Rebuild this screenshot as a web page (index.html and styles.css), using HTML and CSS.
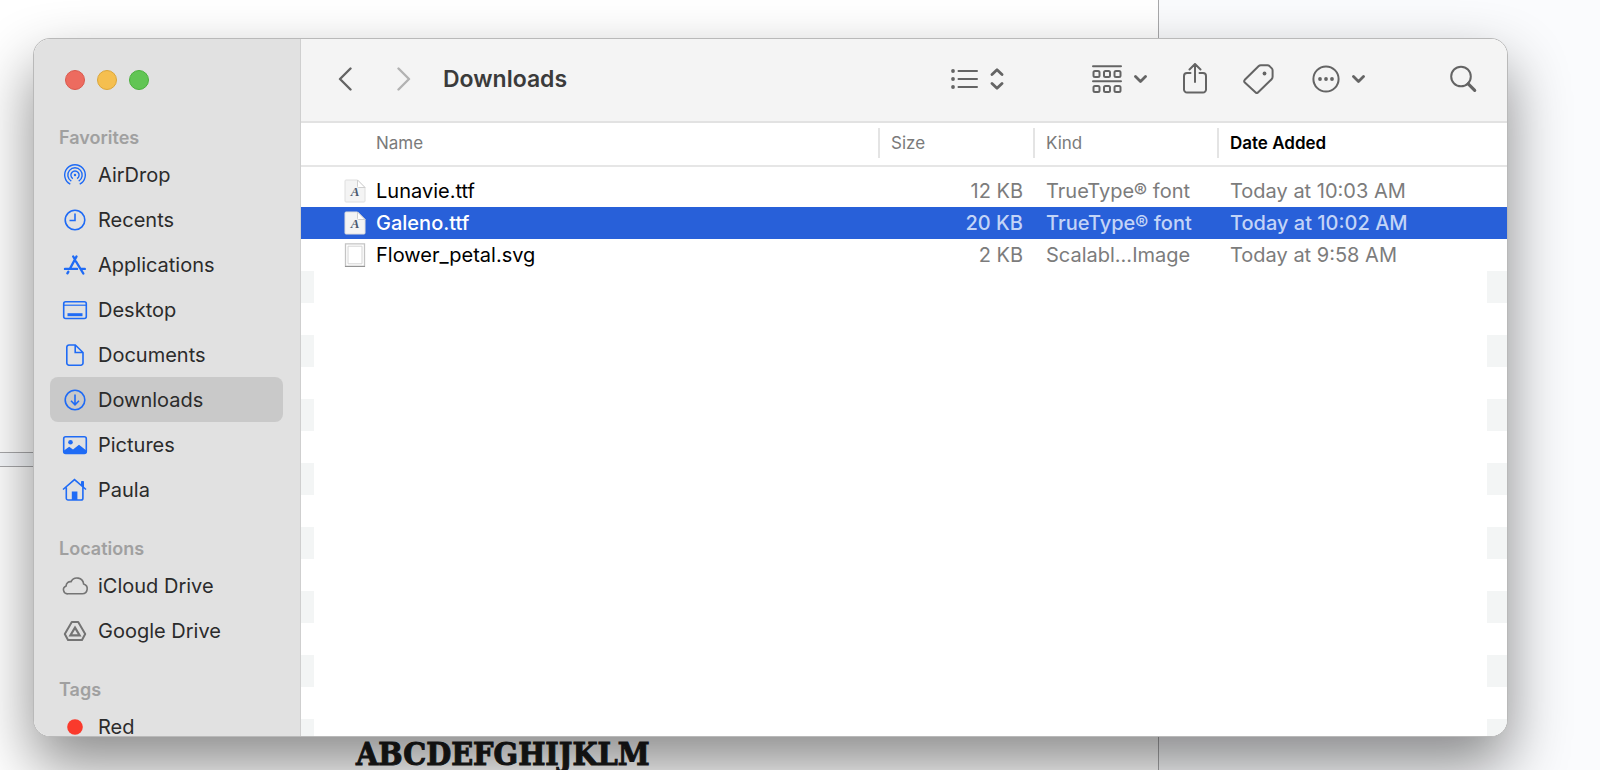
FILE: index.html
```
<!DOCTYPE html>
<html lang="en">
<head>
<meta charset="utf-8">
<title>Downloads</title>
<link rel="stylesheet" href="styles.css">
</head>
<body>
<div class="desktop">
  <div class="page">
    <div class="page-divider"></div>
    <p class="specimen">ABCDEFGHIJKLM</p>
  </div>
  <div class="page-side"></div>

  <main class="window">
    <aside class="sidebar">
      <div class="lights">
        <button class="light light-close" aria-label="Close"></button>
        <button class="light light-min" aria-label="Minimize"></button>
        <button class="light light-zoom" aria-label="Zoom"></button>
      </div>
      <nav class="nav">
        <h2 class="section">Favorites</h2>
        <a class="item" href="#"><svg class="icon" viewBox="0 0 28 28"><circle cx="14" cy="14" r="1.2" fill="currentColor" stroke="none"/><g stroke-width="1.400"><path d="M11.900 17.600a4.100 4.100 0 1 1 4.200 0M10.300 20.200a7.200 7.200 0 1 1 7.400 0M9.300 23.200a10.300 10.300 0 1 1 9.400 0"/></g></svg>AirDrop</a>
        <a class="item" href="#"><svg class="icon" viewBox="0 0 28 28"><circle cx="14" cy="14" r="9.8"/><path d="M14 7.500V14.500H8.500"/></svg>Recents</a>
        <a class="item" href="#"><svg class="icon" viewBox="0 0 28 28"><g stroke-width="2.400" stroke-linecap="round"><path d="M15.500 5.500 9.300 17M12.200 5.500l1.500 2.500M15 10.500l7.300 12M4 17.900h12M19.800 17.900h4M7.300 20.800l-.9 1.500"/></g></svg>Applications</a>
        <a class="item" href="#"><svg class="icon" viewBox="0 0 28 28"><rect x="2.700" y="5.700" width="22.600" height="16.800" rx="2"/><path d="M2.700 9.200h22.600" stroke-width="1.200"/><path d="M6.500 18.700h15" stroke-width="3"/></svg>Desktop</a>
        <a class="item" href="#"><svg class="icon" viewBox="0 0 28 28"><path d="M8 4h6.300L22 11.500V22a2.200 2.200 0 0 1-2.200 2.200H8A2.200 2.200 0 0 1 5.800 22V6.200A2.200 2.200 0 0 1 8 4zM14.200 4v7.500H22"/></svg>Documents</a>
        <a class="item item-active" href="#" aria-current="page"><svg class="icon" viewBox="0 0 28 28"><circle cx="14" cy="14" r="9.800"/><path d="M14 8.500v10M10 14.800l4 4 4-4"/></svg>Downloads</a>
        <a class="item" href="#"><svg class="icon" viewBox="0 0 28 28"><rect x="2.700" y="5.700" width="22.600" height="16.800" rx="2"/><circle cx="9.500" cy="11.300" r="2.300" fill="currentColor" stroke="none"/><path d="M3 19.500 8.200 15.800l3.800 2.700 6-4.800 7 5.500V22H3z" fill="currentColor" stroke="none"/></svg>Pictures</a>
        <a class="item" href="#"><svg class="icon" viewBox="0 0 28 28"><path d="M2 13.500 13.500 3.600 25 13.500M5.300 11.500v10.700a1.800 1.800 0 0 0 1.800 1.800h13a1.800 1.800 0 0 0 1.800-1.800V11"/><path d="M20.500 5.500h2v5.500l-2-1.800z" fill="currentColor" stroke-width="1"/><path d="M10.800 15.500h5.600V24h-5.600z" fill="currentColor" stroke="none"/></svg>Paula</a>
        <h2 class="section section-next">Locations</h2>
        <a class="item item-gray" href="#"><svg class="icon" viewBox="0 0 28 28"><path d="M7 21.800h14.300a5 5 0 0 0 1.300-9.800 6.600 6.600 0 0 0-12.500-2.300 4.300 4.300 0 0 0-5 4.200A4.100 4.100 0 0 0 7 21.800z"/></svg>iCloud Drive</a>
        <a class="item item-gray" href="#"><svg class="icon" viewBox="0 0 28 28"><path stroke-width="2" stroke-linejoin="round" d="M10.800 5h6.400l7 12-3.200 6H7l-3.200-6z"/><path stroke-width="2.200" d="M14 10.600 18.600 18.300H9.400z"/></svg>Google Drive</a>
        <h2 class="section section-next">Tags</h2>
        <a class="item item-red" href="#"><svg class="icon" viewBox="0 0 28 28"><circle cx="14" cy="14" r="7.800" fill="currentColor" stroke="none"/></svg>Red</a>
      </nav>
    </aside>

    <section class="content">
      <header class="toolbar">
        <button class="tool" aria-label="Back"><svg width="14" height="24" viewBox="0 0 14 24"><path stroke-width="2.400" d="M12.500 1.500 2 12l10.500 10.500"/></svg></button>
        <button class="tool tool-forward" aria-label="Forward" disabled><svg width="14" height="24" viewBox="0 0 14 24"><path stroke-width="2.400" d="M1.500 1.500 12 12 1.500 22.500"/></svg></button>
        <h1 class="title">Downloads</h1>
        <button class="tool" aria-label="List view"><svg width="27" height="22" viewBox="0 0 27 22"><g fill="currentColor" stroke="none"><circle cx="2" cy="3" r="1.900"/><circle cx="2" cy="11" r="1.900"/><circle cx="2" cy="19" r="1.900"/></g><path d="M7.500 3h18.500M7.500 11h18.500M7.500 19h18.500"/></svg><svg width="14" height="22" viewBox="0 0 14 22"><path stroke-width="2.800" d="M2 6.500 7 1.700l5 4.800M2 15.500l5 4.800 5-4.800"/></svg></button>
        <button class="tool tool-group" aria-label="Group items"><svg width="30" height="28" viewBox="0 0 30 28"><path d="M1 1.200h28M1 16.200h28"/><g><rect x="1.500" y="6" width="6" height="6" rx="1.500"/><rect x="12" y="6" width="6" height="6" rx="1.500"/><rect x="22.500" y="6" width="6" height="6" rx="1.500"/><rect x="1.500" y="21" width="6" height="6" rx="1.500"/><rect x="12" y="21" width="6" height="6" rx="1.500"/><rect x="22.500" y="21" width="6" height="6" rx="1.500"/></g></svg><svg width="13" height="10" viewBox="0 0 13 10"><path stroke-width="2.800" d="M1.500 2.500l5 5 5-5"/></svg></button>
        <button class="tool" aria-label="Share"><svg width="24" height="32" viewBox="0 0 24 32"><path d="M7.500 10H4a3 3 0 0 0-3 3v13.500a3 3 0 0 0 3 3h16a3 3 0 0 0 3-3V13a3 3 0 0 0-3-3h-3.500M12 19V1.200M6.500 6.500 12 1l5.500 5.500"/></svg></button>
        <button class="tool" aria-label="Tags"><svg width="31" height="30" viewBox="0 0 31 30"><path d="M1.800 15.800 15.500 2.300a3.500 3.500 0 0 1 2.400-1h6.600a3 3 0 0 1 2 .8l2.300 2.300a3 3 0 0 1 .8 2v6.400a3.500 3.500 0 0 1-1 2.400L15.200 28.300a2 2 0 0 1-2.800 0L1.800 18.500a2 2 0 0 1 0-2.700z"/><circle cx="21.500" cy="9.500" r="1.900" fill="currentColor" stroke="none"/></svg></button>
        <button class="tool tool-more" aria-label="More"><svg width="28" height="28" viewBox="0 0 28 28"><circle cx="14" cy="14" r="12.600"/><g fill="currentColor" stroke="none"><circle cx="8" cy="14" r="1.900"/><circle cx="14" cy="14" r="1.900"/><circle cx="20" cy="14" r="1.900"/></g></svg><svg width="13" height="10" viewBox="0 0 13 10"><path stroke-width="2.800" d="M1.500 2.500l5 5 5-5"/></svg></button>
        <button class="tool tool-search" aria-label="Search"><svg width="27" height="28" viewBox="0 0 27 28"><circle cx="11" cy="11.500" r="9.800"/><path stroke-width="3.200" d="M18.200 18.800l6.500 6.500"/></svg></button>
      </header>

      <table class="files">
        <colgroup><col><col class="col-size"><col class="col-kind"><col class="col-date"></colgroup>
        <thead>
          <tr><th class="name">Name</th><th><span class="label">Size</span></th><th><span class="label">Kind</span></th><th><span class="label sorted">Date Added</span></th></tr>
        </thead>
        <tbody>
          <tr><td><div class="file"><svg class="doc" viewBox="0 0 22 24"><path class="sheet" d="M1 2a1 1 0 0 1 1-1h11.500L21 8.500V22a1 1 0 0 1-1 1H2a1 1 0 0 1-1-1z"/><path class="fold" d="M13.500 1v6.500a1 1 0 0 0 1 1H21z"/><text class="letter" x="11" y="17" text-anchor="middle">A</text></svg>Lunavie.ttf</div></td><td class="size">12 KB</td><td class="kind">TrueType® font</td><td class="date">Today at 10:03 AM</td></tr>
          <tr class="selected" aria-selected="true"><td><div class="file"><svg class="doc" viewBox="0 0 22 24"><path class="sheet" d="M1 2a1 1 0 0 1 1-1h11.500L21 8.500V22a1 1 0 0 1-1 1H2a1 1 0 0 1-1-1z"/><path class="fold" d="M13.500 1v6.500a1 1 0 0 0 1 1H21z"/><text class="letter" x="11" y="17" text-anchor="middle">A</text></svg>Galeno.ttf</div></td><td class="size">20 KB</td><td class="kind">TrueType® font</td><td class="date">Today at 10:02 AM</td></tr>
          <tr><td><div class="file"><svg class="doc" viewBox="0 0 22 24"><path d="M1.500.8h19v22.500h-19z" fill="#fff" stroke="#c4c4c4" stroke-width="1.300"/><path d="M4 3.200h14v17.600H4z" fill="#fff" stroke="#d4d4d4"/><path d="M1 23.400h20" stroke="#8e8e8e"/></svg>Flower_petal.svg</div></td><td class="size">2 KB</td><td class="kind">Scalabl...Image</td><td class="date">Today at 9:58 AM</td></tr>
        </tbody>
      </table>
      <div class="empty"><span class="stripes stripes-left"></span><span class="stripes stripes-right"></span></div>
    </section>
  </main>
</div>
</body>
</html>
```
FILE: styles.css
```
* { box-sizing: border-box; }

body {
  margin: 0;
  font-family: Inter, "Liberation Sans", sans-serif;
  font-size: 20px;
  color: #000;
}

h1, h2, p { margin: 0; }

button {
  padding: 0;
  border: 0;
  background: none;
  color: inherit;
  font: inherit;
}

svg {
  display: block;
  flex: none;
  fill: none;
  stroke: currentColor;
}

.desktop {
  position: relative;
  display: grid;
  grid-template-columns: 1159fr 441fr;
  height: 100vh;
  overflow: hidden;
}

.page {
  display: flex;
  flex-direction: column;
  min-height: 0;
  padding-top: 452px;
  border-right: 1px solid #a8a8aa;
  background: #fff;
}

.page-divider {
  flex: none;
  height: 15px;
  border: 1px solid #a8a8aa;
  border-width: 1px 0;
  background: #f8fafd;
}

.specimen {
  margin: 265px 0 0 356px;
  font: bold 32px/44px "DejaVu Serif Condensed", "DejaVu Serif", serif;
  color: #1a1a1a;
  white-space: nowrap;
  -webkit-text-stroke: 1px #1a1a1a;
}

.page-side { background: #fafbfd; }

.window {
  position: absolute;
  inset: 38px 92px 33px 33px;
  display: flex;
  overflow: hidden;
  border: 1px solid #b9b9b9;
  border-radius: 17px;
  background: #fff;
  box-shadow: 0 28px 60px rgba(0, 0, 0, .46);
}

.sidebar {
  flex: none;
  width: 267px;
  overflow: hidden;
  border-right: 1px solid #cfcfcf;
  background: #e1e1e1;
}

.lights {
  display: flex;
  gap: 12px;
  padding: 31px 0 0 31px;
}

.light {
  width: 20px;
  height: 20px;
  border: 1px solid;
  border-radius: 50%;
}

.light-close { background: #ed6b5f; border-color: #d9594d; }
.light-min { background: #f5bf4f; border-color: #dba63a; }
.light-zoom { background: #61c554; border-color: #4bb03e; }

.nav { padding: 33px 17px 0 16px; }

.section {
  padding-left: 9px;
  font-size: 18px;
  font-weight: 600;
  line-height: 29px;
  color: #a0a0a0;
}

.section-next { margin-top: 22px; }

.item {
  display: flex;
  align-items: center;
  gap: 9px;
  height: 45px;
  padding-left: 11px;
  border-radius: 8px;
  color: #2b2b2b;
  text-decoration: none;
}

.item-active { background: #c9c9c9; }

.icon {
  width: 28px;
  height: 28px;
  color: #1f6bf5;
  stroke-width: 1.6;
}

.item-gray .icon { color: #747474; }
.item-red .icon { color: #fa3a2c; }

.content {
  display: flex;
  flex: 1;
  flex-direction: column;
  min-width: 0;
}

.toolbar {
  display: flex;
  flex: none;
  align-items: center;
  gap: 36px;
  height: 84px;
  padding: 0 30px 2px 37px;
  border-bottom: 2px solid #e2e2e2;
  background: #f4f4f4;
}

.tool {
  display: flex;
  align-items: center;
  gap: 12px;
  color: #646464;
}

.tool svg { stroke-width: 2; stroke-linecap: round; stroke-linejoin: round; }
.tool-forward { margin-left: 9px; color: #b2b2b2; }
.tool-group { margin-left: 52px; }
.tool-more { margin-left: 2px; }
.tool-search { margin-left: 49px; }

.title {
  flex: 1;
  margin-left: -4px;
  font-size: 23px;
  font-weight: 600;
  color: #3b3b3b;
}

.files {
  width: 100%;
  flex: none;
  table-layout: fixed;
  border-collapse: collapse;
}

.col-size { width: 155px; }
.col-kind { width: 184px; }
.col-date { width: 290px; }

th {
  height: 43px;
  padding: 0;
  border-bottom: 2px solid #e6e6e6;
  font-size: 17px;
  font-weight: 400;
  text-align: left;
  color: #7a7a7a;
}

.name { padding: 0 0 3px 75px; }

.label {
  display: block;
  margin-bottom: 3px;
  padding-left: 11px;
  border-left: 2px solid #e4e4e4;
  line-height: 30px;
}

.sorted { font-weight: 600; color: #000; }

tbody::before {
  content: "";
  display: block;
  height: 8px;
}

td {
  height: 32px;
  padding: 0;
  white-space: nowrap;
  color: #7c7c7c;
}

.file {
  display: flex;
  align-items: center;
  gap: 10px;
  padding-left: 43px;
  color: #000;
}

.size { padding-right: 10px; text-align: right; }
.kind, .date { padding-left: 13px; }

.selected { background: #2860d9; }
.selected td { color: #c3d4f7; }
.selected .file { color: #fff; }
.selected td, .selected .file { font-weight: 500; }

.doc { width: 22px; height: 24px; }
.sheet { fill: #f4f4f4; stroke: #dedede; }
.fold { fill: #fff; stroke: #cfcfcf; stroke-width: 1; }
.letter {
  fill: #4b5a6e;
  stroke: none;
  font: italic bold 13px "Liberation Serif", serif;
}

.empty {
  display: flex;
  flex: 1;
  justify-content: space-between;
}

.stripes { background: repeating-linear-gradient(#f3f5f5 0 32px, #fff 32px 64px); }
.stripes-left { width: 13px; }
.stripes-right { width: 20px; }
```
